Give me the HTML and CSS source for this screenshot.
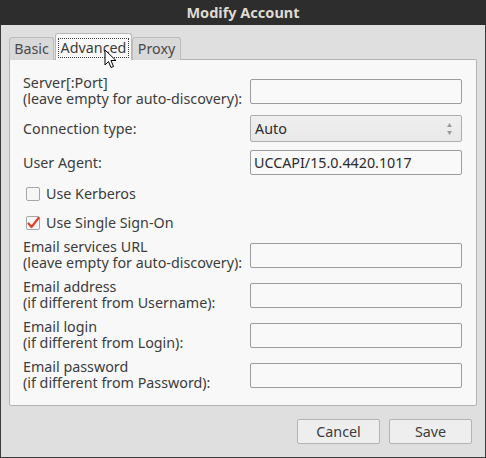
FILE: index.html
```html
<!DOCTYPE html>
<html>
<head>
<meta charset="utf-8">
<link rel="stylesheet" href="styles.css">
</head>
<body>
<div class="window">
  <div class="titlebar">Modify Account</div>
  <div class="content">
    <div class="tabs">
      <div class="tab tab-basic">Basic</div>
      <div class="tab tab-active"><span class="focus">Advanced</span></div>
      <div class="tab tab-proxy">Proxy</div>
    </div>
    <div class="panel">
      <div class="row">
        <div class="label">Server[:Port]<br>(leave empty for auto-discovery):</div>
        <div class="input"></div>
      </div>
      <div class="row">
        <div class="label">Connection type:</div>
        <div class="combo">
          <span>Auto</span>
          <svg class="arrows" width="7" height="14" viewBox="0 0 7 14"><path d="M3.5 1 L6 5 L1 5 Z" fill="#9a9a9a"/><path d="M1 9 L6 9 L3.5 13 Z" fill="#9a9a9a"/></svg>
        </div>
      </div>
      <div class="row">
        <div class="label">User Agent:</div>
        <div class="input">UCCAPI/15.0.4420.1017</div>
      </div>
      <div class="check-row first-check">
        <span class="box"></span>
        <span class="check-label">Use Kerberos</span>
      </div>
      <div class="check-row">
        <span class="box">
          <svg width="14" height="14" viewBox="0 0 14 14"><path d="M2.5 7.5 L5.5 11 L12.5 2" fill="none" stroke="#d9432c" stroke-width="2.2" stroke-linecap="round" stroke-linejoin="round"/></svg>
        </span>
        <span class="check-label">Use Single Sign-On</span>
      </div>
      <div class="row email-first">
        <div class="label">Email services URL<br>(leave empty for auto-discovery):</div>
        <div class="input"></div>
      </div>
      <div class="row">
        <div class="label">Email address<br>(if different from Username):</div>
        <div class="input"></div>
      </div>
      <div class="row">
        <div class="label">Email login<br>(if different from Login):</div>
        <div class="input"></div>
      </div>
      <div class="row">
        <div class="label">Email password<br>(if different from Password):</div>
        <div class="input"></div>
      </div>
    </div>
    <div class="buttons">
      <div class="button">Cancel</div>
      <div class="button">Save</div>
    </div>
  </div>
  <svg class="cursor" width="13" height="20" viewBox="0 0 13 20"><path d="M1 1 L1 16 L4.5 12.5 L7 18.5 L9.5 17.5 L7 11.5 L12 11.5 Z" fill="#fff" stroke="#000" stroke-width="1" stroke-linejoin="round"/></svg>
</div>
</body>
</html>
```
FILE: styles.css
```css
* { box-sizing: border-box; }
html, body { margin: 0; padding: 0; }
body {
  font-family: "Noto Sans", "DejaVu Sans", sans-serif;
  font-size: 14.3px;
  color: #3c3c3c;
}
.window {
  position: relative;
  width: 486px;
  height: 458px;
  background: #dfdfdf;
  border: 1px solid #3a3a3a;
  border-top: none;
}
.titlebar {
  height: 25px;
  margin: 0 -1px;
  background: #2d2d2d;
  color: #dfdbd2;
  font-weight: bold;
  font-size: 14.5px;
  line-height: 25px;
  text-align: center;
}
.content {
  padding: 8px 8px 0 8px;
}
.tabs {
  display: flex;
  align-items: flex-end;
  height: 27px;
  position: relative;
  z-index: 1;
  margin-bottom: -1px;
}
.tab {
  height: 23px;
  background: #d9d9d9;
  border: 1px solid #bdbdbd;
  border-bottom: none;
  border-radius: 3px 3px 0 0;
  color: #4a4a4a;
  line-height: 22px;
  text-align: center;
}
.tab-basic { width: 45px; }
.tab-proxy { width: 49px; margin-left: 0; }
.tab-active {
  width: 77px;
  height: 27px;
  margin-left: 1px;
  background: #f8f8f8;
  border-color: #b8b8b8;
  padding-top: 4px;
  color: #3c3c3c;
}
.focus {
  display: block;
  margin: 0 2px;
  height: 20px;
  line-height: 18px;
  border: 1px dotted #3c3c3c;
}
.panel {
  height: 347px;
  width: 468px;
  background: #f8f8f8;
  border: 1px solid #b3b3b3;
  border-radius: 0 2px 2px 2px;
  padding: 15px 0 0 13px;
}
.row {
  display: flex;
  align-items: center;
  min-height: 32px;
  margin-bottom: 8px;
}
.label {
  width: 227px;
  line-height: 16px;
  white-space: nowrap;
}
.input {
  width: 212px;
  height: 25px;
  border: 1px solid #9c9c9c;
  border-radius: 2px;
  background: #f9f9f9;
  padding: 0 3px;
  line-height: 23px;
  color: #2b2b2b;
}
.combo {
  width: 212px;
  height: 27px;
  border: 1px solid #adadad;
  border-radius: 2px;
  background: linear-gradient(#efefef, #e8e8e8);
  display: flex;
  align-items: center;
  justify-content: space-between;
  padding: 0 8px 0 4px;
  color: #2b2b2b;
}
.arrows { display: block; }
.row:nth-child(2) { min-height: 27px; }
.row:nth-child(3) { min-height: 25px; }
.check-row {
  display: flex;
  align-items: center;
  height: 21px;
  margin-bottom: 8px;
  padding-left: 3px;
}
.first-check { margin-top: 0; }
.box {
  width: 14px;
  height: 14px;
  border: 1px solid #a6a6a6;
  border-radius: 2px;
  background: #f6f6f6;
  margin-right: 6px;
  position: relative;
}
.box svg { position: absolute; left: -1px; top: -1px; }
.email-first { margin-top: -2px; }
.buttons {
  display: flex;
  justify-content: flex-end;
  gap: 9px;
  margin-top: 13px;
  padding-right: 5px;
}
.button {
  width: 83px;
  height: 25px;
  border: 1px solid #b4b4b4;
  border-radius: 2px;
  background: #eeeeee;
  text-align: center;
  line-height: 23px;
  color: #3c3c3c;
}
.cursor {
  position: absolute;
  left: 103px;
  top: 49px;
  z-index: 5;
}
```
